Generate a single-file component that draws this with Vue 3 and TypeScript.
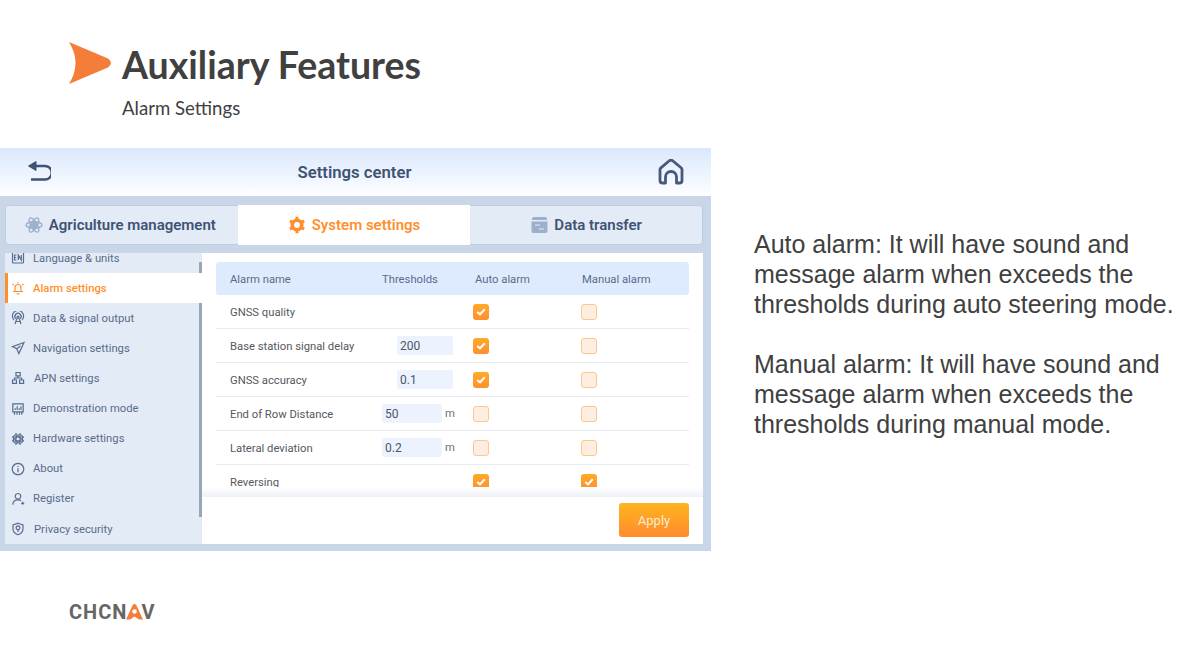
<script setup lang="ts">
interface NavItem {
  label: string
  paths: string[]
  active?: boolean
  shift?: boolean
}

interface AlarmRow {
  name: string
  value?: string
  unit?: string
  auto: boolean
  manual: boolean
}

const navItems: NavItem[] = [
  { label: "Language & units", paths: ["M2.5 1H11.500a1 1 0 0 1 1 1V11a1 1 0 0 1-1 1H2.500a1 1 0 0 1-1-1V2a1 1 0 0 1 1-1Z", "M5.500 4H3.500v5h2M3.500 6.500h1.800M7.300 9V4l3 5V4"] },
  { label: "Alarm settings", active: true, paths: ["M4 10V6.500a3 3 0 0 1 6 0V10", "M2 10.500h10M5.800 12.800h2.400M7 1v1.200M1.500 3l1.300 1M12.500 3l-1.300 1"] },
  { label: "Data & signal output", paths: ["M3 9a5.600 5.600 0 1 1 8 0", "M4.800 7.600a3.100 3.100 0 1 1 4.400 0", "M7 5.200a1 1 0 1 0 .01 0M5.900 7.400 4 13M8.100 7.400 10 13M5 10.500h4"] },
  { label: "Navigation settings", paths: ["M13 1.500 1.500 5.700l4.200 2.100 2.200 4.700L13 1.500Z", "M5.700 7.800 9.500 5"] },
  { label: "APN settings", shift: true, paths: ["M5 1.500h4.200v3.400H5zM1.500 9h4v3.400h-4zM8.600 9h4v3.400h-4z", "M7 5v2H3.500v2M7 7h3.600v2"] },
  { label: "Demonstration mode", paths: ["M1.800 1.800h10.400v8H1.800z", "M4.200 8V6.300M6.200 8V4.200M8.200 8V6.300M10 8V4.200", "M3.500 10v2.800M6 10v2.800M8.500 10v2.800M10.800 10v2.800"] },
  { label: "Hardware settings", paths: ["M4 3h6l1.500 1.500v5L10 11H4L2.500 9.500v-5Z", "M7 4.800a2.200 2.200 0 1 0 .01 0", "M7 3.800a3.200 3.200 0 1 0 .01 0", "M5 1v2M9 1v2M5 11v2M9 11v2M1 5.200h1.500M1 8.800h1.500M11.500 5.200H13M11.500 8.800H13"] },
  { label: "About", paths: ["M7 1.300a5.700 5.700 0 1 0 .01 0", "M7 6.300v4M7 3.900v1"] },
  { label: "Register", paths: ["M7 1.500a2.800 2.800 0 1 0 .01 0", "M1.800 12.800c0-3 2-5 5.200-5 1.300 0 2.300.3 3.100 1", "M10.200 11.300h3M11.700 9.800v3"] },
  { label: "Privacy security", shift: true, paths: ["M7 1.200 12 3v3.800c0 3-2.200 5-5 6-2.800-1-5-3-5-6V3Z", "M7 3.900a1.900 1.900 0 1 0 .01 0", "M7 7.700v2.300"] },
]

const rows: AlarmRow[] = [
  { name: "GNSS quality", auto: true, manual: false },
  { name: "Base station signal delay", value: "200", auto: true, manual: false },
  { name: "GNSS accuracy", value: "0.1", auto: true, manual: false },
  { name: "End of Row Distance", value: "50", unit: "m", auto: false, manual: false },
  { name: "Lateral deviation", value: "0.2", unit: "m", auto: false, manual: false },
  { name: "Reversing", auto: true, manual: true },
]
</script>

<template>
  <div class="page">
    <header class="head">
      <svg class="head-arrow" width="42" height="42" viewBox="0 0 42 42">
        <path d="M0 0 39 16.500Q42 19 42 21T39 25.500L0 42Q13 21 0 0Z" fill="#f47d3a" />
      </svg>
      <div>
        <h1>Auxiliary Features</h1>
        <p>Alarm Settings</p>
      </div>
    </header>

    <main class="main">
      <section class="screen">
        <div class="topbar">
          <svg width="24" height="22" viewBox="0 0 24 22" fill="none" stroke="#3f5374" stroke-width="2.500">
            <path d="M9 5h9a4.800 4.800 0 0 1 0 13.500H4" />
            <path d="M9 .5v9L1.500 5Z" fill="#3f5374" stroke-width="1" stroke-linejoin="round" />
          </svg>
          <span class="topbar-title">Settings center</span>
          <svg width="26" height="26" viewBox="0 0 26 26" fill="none" stroke="#46597a" stroke-width="2.800" stroke-linejoin="round">
            <path d="M7.500 24H4.500A2.500 2.500 0 0 1 2 21.500V10.800c0-.8.300-1.500.900-2L11 2a3 3 0 0 1 4 0l8.100 6.800c.6.500.9 1.200.9 2v10.700a2.500 2.500 0 0 1-2.500 2.500h-3V18a5.500 5.500 0 0 0-11 0Z" />
          </svg>
        </div>

        <div class="body">
          <nav class="tabs">
            <div class="tab tab-first">
              <svg width="18" height="18" viewBox="0 0 18 18" fill="none" stroke="#9db0cb" stroke-width="1.400">
                <ellipse cx="9" cy="9" rx="8" ry="3.200" />
                <ellipse cx="9" cy="9" rx="8" ry="3.200" transform="rotate(60 9 9)" />
                <ellipse cx="9" cy="9" rx="8" ry="3.200" transform="rotate(120 9 9)" />
                <circle cx="9" cy="9" r="2.400" fill="#9db0cb" />
              </svg>
              Agriculture management
            </div>
            <div class="tab tab-active">
              <svg width="18" height="18" viewBox="0 0 18 18" fill="none" stroke="#ff8f2e" stroke-width="3.600">
                <circle cx="9" cy="9" r="4.700" />
                <path stroke-width="3" d="M9 .8v3M9 14.200v3M1.900 4.900l2.600 1.500M13.500 11.600l2.600 1.500M1.900 13.100l2.600-1.500M13.500 6.400l2.600-1.500" />
              </svg>
              System settings
            </div>
            <div class="tab">
              <svg width="17" height="16" viewBox="0 0 17 16">
                <path d="M3 0h11a2 2 0 0 1 2 2v1H1V2a2 2 0 0 1 2-2Z" fill="#9db0cb" />
                <path d="M.5 4.500h16V14a2 2 0 0 1-2 2h-12a2 2 0 0 1-2-2Z" fill="#9db0cb" />
                <path d="M4 8h5M8 12h5" stroke="#e3ebf6" stroke-width="1.200" />
              </svg>
              Data transfer
            </div>
          </nav>

          <div class="panels">
            <aside class="side">
              <ul class="nav">
                <li v-for="item in navItems" :key="item.label" class="nav-item" :class="{ 'nav-active': item.active }">
                  <svg class="nav-icon" width="14" height="14" viewBox="0 0 14 14" fill="none" stroke="currentColor" stroke-width="1.200">
                    <path v-for="d in item.paths" :key="d" :d="d" />
                  </svg>
                  <span :class="{ 'nav-shift': item.shift }">{{ item.label }}</span>
                </li>
              </ul>
              <div class="side-scroll"></div>
            </aside>

            <div class="content">
              <div class="table-wrap">
                <div class="grid table-head">
                  <span>Alarm name</span>
                  <span>Thresholds</span>
                  <span class="head-auto">Auto alarm</span>
                  <span class="head-manual">Manual alarm</span>
                </div>
                <div v-for="row in rows" :key="row.name" class="grid table-row">
                  <span class="row-name">{{ row.name }}</span>
                  <div class="thresh" :class="{ 'thresh-unit': row.unit }">
                    <template v-if="row.value">
                      <span class="value">{{ row.value }}</span>
                      <span v-if="row.unit" class="unit">{{ row.unit }}</span>
                    </template>
                  </div>
                  <span class="check" :class="{ 'check-on': row.auto }">
                    <svg v-if="row.auto" width="10" height="8" viewBox="0 0 10 8" fill="none" stroke="#fff" stroke-width="2"><path d="M1.200 4 4 6.300 8.800 1.200" /></svg>
                  </span>
                  <span class="check" :class="{ 'check-on': row.manual }">
                    <svg v-if="row.manual" width="10" height="8" viewBox="0 0 10 8" fill="none" stroke="#fff" stroke-width="2"><path d="M1.200 4 4 6.300 8.800 1.200" /></svg>
                  </span>
                </div>
              </div>
              <div class="fade"></div>
              <div class="actions">
                <button class="apply" type="button">Apply</button>
              </div>
            </div>
          </div>
        </div>
      </section>

      <section class="notes">
        <p>Auto alarm: It will have sound and message alarm when exceeds the thresholds during auto steering mode.</p>
        <p>Manual alarm: It will have sound and message alarm when exceeds the thresholds during manual mode.</p>
      </section>
    </main>

    <footer class="foot">
      <span class="logo">CHCN</span>
      <svg class="logo-a" width="17" height="16" viewBox="0 0 17 16">
        <path d="M8.500 0C9.500 0 10 .6 10.500 1.600L17 15.500H13L8.500 12.500 4 15.500H0L6.500 1.600C7 .6 7.500 0 8.500 0Z" fill="#f47d3a" />
        <circle cx="8.500" cy="7.500" r="2.300" fill="#fff" />
      </svg>
      <span class="logo logo-v">V</span>
    </footer>
  </div>
</template>

<style>
html,
body {
  margin: 0;
  background: #fff;
}
</style>

<style scoped>
.page {
  width: 1201px;
  height: 668px;
  overflow: hidden;
  background: #fff;
}
.head {
  box-sizing: border-box;
  height: 148px;
  padding: 42px 0 0 69px;
  display: flex;
  gap: 11px;
}
.head-arrow {
  flex: none;
}
h1 {
  margin: 0;
  font: 700 37.500px/46px Lato, sans-serif;
  color: #404040;
}
.head p {
  margin: 8px 0 0;
  font: 400 18.600px/24px Lato, sans-serif;
  color: #404040;
}
.main {
  display: flex;
  height: 403px;
}
.screen {
  flex: none;
  width: 711px;
  background: #c8d6e7;
  font-family: Roboto, sans-serif;
}
.topbar {
  box-sizing: border-box;
  height: 48px;
  padding: 0 27px;
  display: flex;
  align-items: center;
  justify-content: space-between;
  background: linear-gradient(#dbe8fd, #fdfeff);
}
.topbar-title {
  font-size: 16.700px;
  font-weight: 600;
  color: #3f5374;
}
.body {
  padding: 9px 8px 7px 5px;
}
.tabs {
  box-sizing: border-box;
  display: grid;
  grid-template-columns: repeat(3, 1fr);
  height: 40px;
  background: #e3ebf6;
  border-radius: 4px;
  box-shadow: inset 0 0 0 1px #bccce1;
}
.tab {
  display: flex;
  align-items: center;
  justify-content: center;
  gap: 6px;
  font-size: 15px;
  font-weight: 600;
  color: #3f5374;
}
.tab-first {
  padding-right: 2px;
}
.tab-active {
  background: #fff;
  color: #ff8f2e;
}
.panels {
  display: flex;
  height: 291px;
  margin-top: 8px;
}
.side {
  position: relative;
  flex: none;
  width: 197px;
  overflow: hidden;
  background: #e3ebf6;
}
.nav {
  list-style: none;
  margin: -10px 0 0;
  padding: 0;
}
.nav-item {
  box-sizing: border-box;
  display: flex;
  align-items: center;
  gap: 8px;
  height: 30.120px;
  padding-left: 6px;
  font-size: 11.250px;
  color: #596c8b;
}
.nav-icon {
  flex: none;
}
.nav-shift {
  margin-left: 1px;
}
.nav-active {
  position: relative;
  z-index: 1;
  background: #fff;
  color: #ff8f2e;
  font-weight: 500;
  border-left: 3px solid #ff8f2e;
  padding-left: 3px;
}
.side-scroll {
  position: absolute;
  top: 9px;
  right: 0;
  width: 3px;
  height: 255px;
  background: #9aa5b5;
}
.content {
  flex: 1;
  display: flex;
  flex-direction: column;
  background: #fff;
}
.table-wrap {
  box-sizing: border-box;
  height: 234px;
  padding: 9px 14px 0;
  overflow: hidden;
}
.grid {
  display: grid;
  grid-template-columns: 152px 91px 108px 1fr;
  align-items: center;
  padding-left: 14px;
  font-size: 11.250px;
}
.table-head {
  height: 33px;
  background: #deebfe;
  border-radius: 3px;
  color: #596c8b;
}
.table-head span,
.row-name {
  padding-top: 2px;
}
.head-auto {
  padding-left: 2px;
}
.head-manual {
  padding-left: 1px;
}
.table-row {
  box-sizing: border-box;
  height: 34px;
  border-bottom: 1px solid #e8eaee;
  color: #55585e;
}
.thresh {
  display: flex;
  align-items: center;
  gap: 3px;
  padding-left: 15px;
}
.thresh-unit {
  padding-left: 0;
}
.value {
  box-sizing: border-box;
  width: 56px;
  height: 19px;
  line-height: 20px;
  padding-left: 3px;
  background: #ecf3fe;
  border-radius: 2px;
  font-size: 12px;
  color: #4a5568;
}
.thresh-unit .value {
  width: 60px;
}
.unit {
  color: #6a6f78;
}
.check {
  box-sizing: border-box;
  display: flex;
  align-items: center;
  justify-content: center;
  width: 16px;
  height: 16px;
  border-radius: 3px;
  background: #feeee2;
  border: 1px solid #fbc98f;
}
.check-on {
  background: linear-gradient(#ffaa28, #ff8f2e);
  border: none;
}
.fade {
  height: 10px;
  background: linear-gradient(#ffffff, #eef2f6);
}
.actions {
  flex: 1;
  display: flex;
  justify-content: flex-end;
  padding: 6px 14px 0 0;
}
.apply {
  width: 70px;
  height: 34px;
  padding: 0;
  border: none;
  border-radius: 3px;
  background: linear-gradient(#ffb41f, #ff8c2e);
  color: #fdebd3;
  font: 400 13px Roboto, sans-serif;
}
.notes {
  padding: 81px 0 0 43px;
  width: 440px;
  font: 400 25px/30px "Liberation Sans", Arial, sans-serif;
  color: #404040;
}
.notes p {
  margin: 0 0 30px;
}
.foot {
  display: flex;
  align-items: center;
  padding: 50px 0 0 69px;
  height: 22px;
}
.logo {
  font: 700 20px/22px Roboto, sans-serif;
  letter-spacing: 1px;
  color: #666;
}
.logo-a {
  margin-left: -1px;
}
.logo-v {
  margin-left: -2px;
}
</style>
